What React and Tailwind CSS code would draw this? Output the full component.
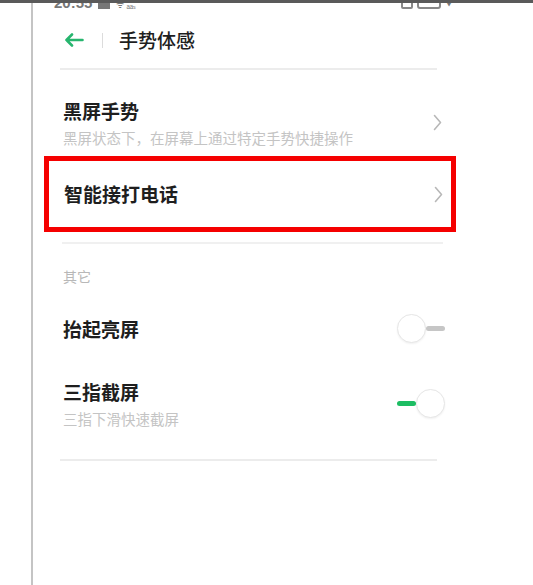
import React from "react";

function Chevron() {
  return (
    <svg width="9" height="17" viewBox="0 0 9 17" fill="none">
      <path d="M1.5 1.5 L7.5 8.5 L1.5 15.5" stroke="#b8b8b8" strokeWidth="1.6" strokeLinecap="round" strokeLinejoin="round" />
    </svg>
  );
}

function Toggle({ on }) {
  return (
    <div className="flex w-[48px] items-center">
      {on && <div className="h-[5px] w-[19px] rounded-full bg-[#1dbd63]" />}
      <div className="h-[29px] w-[29px] rounded-full border border-[#e6e6e6] bg-white shadow-[0_1px_2px_rgba(0,0,0,0.06)]" />
      {!on && <div className="h-[5px] w-[19px] rounded-full bg-[#c6c6c6]" />}
    </div>
  );
}

export default function App() {
  return (
    <div className="h-[585px] w-[533px] overflow-hidden border-t-[3px] border-[#5a5a5a] bg-white font-['Noto_Sans_CJK_SC',sans-serif]">
      <div className="ml-[31px] h-full border-l-2 border-[#c4c4c4]">
        {/* status bar, cut at the top */}
        <div className="flex h-[19px] items-start overflow-hidden pl-[21px] pr-[80px] text-[#777]">
          <div className="-mt-[9px] flex items-center gap-[6px]">
            <span className="font-['Liberation_Sans',sans-serif] text-[15px] font-bold leading-[18px]">20:55</span>
            <span className="mt-[2px] h-[10px] w-[12px] bg-[#777]" />
            <span className="mt-[3px] text-[9px] leading-[10px]">ᯤ ₐₐₛ</span>
          </div>
          <div className="-mt-[7px] ml-auto flex items-center gap-[4px]">
            <span className="h-[13px] w-[12px] rounded-[2px] border-2 border-[#888]" />
            <span className="h-[13px] w-[24px] rounded-[3px] border-2 border-[#888]" />
            <span className="text-[8px] leading-[10px]">▼</span>
          </div>
        </div>

        {/* header */}
        <div className="flex h-[36px] items-center pl-[31px]">
          <svg width="20" height="14" viewBox="0 0 20 14" fill="none">
            <path d="M18.5 7 H2.5 M8 1.5 L2.5 7 L8 12.5" stroke="#27b56e" strokeWidth="2.6" strokeLinecap="round" strokeLinejoin="round" />
          </svg>
          <div className="ml-[18px] h-[15px] w-px bg-[#dcdcdc]" />
          <span className="ml-[16px] text-[19px] font-medium leading-[26px] text-[#1e1e1e]">手势体感</span>
        </div>

        <div className="ml-[27px] mt-[10px] h-[2px] w-[377px] bg-[#ececec]" />

        {/* 黑屏手势 */}
        <div className="ml-[30px] mt-[28px] flex w-[379px] items-center">
          <div className="flex-1">
            <div className="text-[19px] font-bold leading-[26px] text-[#1e1e1e]">黑屏手势</div>
            <div className="mt-[5px] text-[14.5px] leading-[17px] text-[#c4c4c4]">黑屏状态下，在屏幕上通过特定手势快捷操作</div>
          </div>
          <Chevron />
        </div>

        {/* 智能接打电话 (highlighted) */}
        <div className="ml-[11px] mt-[10px] flex h-[76px] w-[412px] items-center border-[5px] border-[#f50000] pl-[15px] pr-[8px]">
          <span className="flex-1 text-[19px] font-bold leading-[26px] text-[#1e1e1e]">智能接打电话</span>
          <Chevron />
        </div>

        <div className="ml-[29px] mt-[10px] h-[2px] w-[381px] bg-[#f0f0f0]" />

        <div className="ml-[30px] mt-[24px] text-[14px] leading-[16px] text-[#b8b8b8]">其它</div>

        {/* 抬起亮屏 */}
        <div className="ml-[30px] mt-[30px] flex w-[382px] items-center">
          <span className="flex-1 text-[19px] font-bold leading-[26px] text-[#1e1e1e]">抬起亮屏</span>
          <Toggle on={false} />
        </div>

        {/* 三指截屏 */}
        <div className="ml-[30px] mt-[36px] flex w-[382px] items-center">
          <div className="flex-1">
            <div className="text-[19px] font-bold leading-[26px] text-[#1e1e1e]">三指截屏</div>
            <div className="mt-[5px] text-[14.5px] leading-[17px] text-[#c4c4c4]">三指下滑快速截屏</div>
          </div>
          <Toggle on />
        </div>

        <div className="ml-[27px] mt-[32px] h-[2px] w-[377px] bg-[#ececec]" />
      </div>
    </div>
  );
}
